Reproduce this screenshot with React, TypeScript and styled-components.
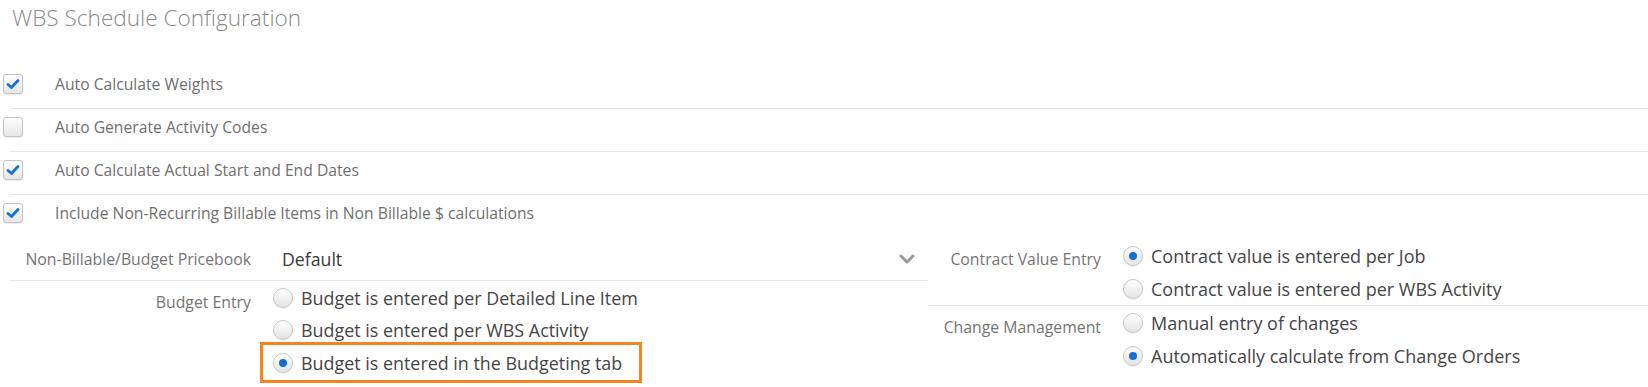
import React from "react";
import styled, { createGlobalStyle } from "styled-components";

const GlobalStyle = createGlobalStyle`
  html, body { margin: 0; padding: 0; background: #fff; }
  body { font-family: "Open Sans", "Noto Sans", sans-serif; color: #555; }
  * { box-sizing: border-box; }
`;

const Page = styled.div`
  width: 1648px;
  height: 387px;
  overflow: hidden;
`;

const Title = styled.h1`
  margin: 0;
  padding: 3px 0 0 12px;
  font-weight: 300;
  font-size: 22.6px;
  line-height: 30px;
  color: #8a8a8a;
`;

const CheckList = styled.div`
  margin-top: 33px;
`;

const CheckRow = styled.label`
  display: flex;
  align-items: center;
  gap: 32px;
  height: 42px;
  padding: 8px 0 14px 3px;
  font-size: 15.7px;
  line-height: 20px;
  color: #707070;
`;

const Divider = styled.div`
  height: 1px;
  margin-left: 10px;
  background: #e5e5e5;
`;

const Box = styled.span`
  flex-shrink: 0;
  width: 20px;
  height: 20px;
  border: 1px solid #c4c4c4;
  border-radius: 3px;
  background: linear-gradient(#ffffff, #e6e6e6);
  box-shadow: 0 1px 1px rgba(0, 0, 0, 0.08);
  display: flex;
  align-items: center;
  justify-content: center;
`;

const Lower = styled.div`
  display: flex;
`;

const LeftCol = styled.div`
  width: 918px;
  margin-left: 10px;
`;

const RightCol = styled.div`
  flex: 1;
  font-stretch: 88%;
`;

const SelectRow = styled.div`
  display: flex;
  align-items: center;
  height: 44px;
  border-bottom: 1px solid #e5e5e5;
`;

const FieldRow = styled.div<{ $divider?: boolean; $pt: number }>`
  display: flex;
  align-items: flex-start;
  padding-top: ${(p) => p.$pt}px;
  border-bottom: ${(p) => (p.$divider ? "1px solid #e5e5e5" : "none")};
`;

const FieldLabel = styled.div<{ $width: number; $pt?: number; $size: number }>`
  flex-shrink: 0;
  width: ${(p) => p.$width}px;
  padding-top: ${(p) => p.$pt ?? 0}px;
  text-align: right;
  white-space: nowrap;
  font-size: ${(p) => p.$size}px;
  line-height: 24px;
  color: #757575;
`;

const SelectBox = styled.div`
  flex: 1;
  display: flex;
  align-items: center;
  justify-content: space-between;
  margin-left: 31px;
  padding-right: 13px;
  font-size: 17.7px;
  color: #3a3a3a;
`;

const Options = styled.div`
  margin-left: 22px;
  display: flex;
  flex-direction: column;
`;

const Option = styled.label<{ $h: number; $size: number }>`
  display: flex;
  align-items: center;
  gap: 8px;
  height: ${(p) => p.$h}px;
  font-size: ${(p) => p.$size}px;
  color: #454545;
  white-space: nowrap;
`;

const Highlight = styled.div`
  align-self: flex-start;
  margin: -4px 0 0 -13px;
  padding: 0 17px 0 10px;
  height: 41px;
  display: flex;
  align-items: center;
  border: 3px solid #f5841f;
`;

const Radio = styled.span<{ $on?: boolean }>`
  flex-shrink: 0;
  width: 20px;
  height: 20px;
  border-radius: 50%;
  border: 1px solid #c6c6c6;
  background: linear-gradient(#ffffff, #e4e4e4);
  box-shadow: 0 1px 1px rgba(0, 0, 0, 0.06);
  display: flex;
  align-items: center;
  justify-content: center;
  &::after {
    content: "";
    display: ${(p) => (p.$on ? "block" : "none")};
    width: 8px;
    height: 8px;
    border-radius: 50%;
    background: #1470d6;
  }
`;

const Check = () => (
  <svg width="14" height="12" viewBox="0 0 14 12">
    <polyline
      points="2,6.5 5.5,9.5 12,2.5"
      fill="none"
      stroke="#1a6fd2"
      strokeWidth="2.8"
      strokeLinecap="round"
      strokeLinejoin="round"
    />
  </svg>
);

const Chevron = () => (
  <svg width="16" height="10" viewBox="0 0 16 10">
    <polyline
      points="2,2 8,8 14,2"
      fill="none"
      stroke="#9a9a9a"
      strokeWidth="3"
      strokeLinecap="round"
      strokeLinejoin="round"
    />
  </svg>
);

const checks = [
  { label: "Auto Calculate Weights", on: true },
  { label: "Auto Generate Activity Codes", on: false },
  { label: "Auto Calculate Actual Start and End Dates", on: true },
  { label: "Include Non-Recurring Billable Items in Non Billable $ calculations", on: true },
];

export default function App() {
  return (
    <Page>
      <GlobalStyle />
      <Title>WBS Schedule Configuration</Title>
      <CheckList>
        {checks.map((c, i) => (
          <React.Fragment key={c.label}>
            {i > 0 && <Divider />}
            <CheckRow>
              <Box>{c.on && <Check />}</Box>
              {c.label}
            </CheckRow>
          </React.Fragment>
        ))}
      </CheckList>
      <Lower>
        <LeftCol>
          <SelectRow>
            <FieldLabel $width={241} $size={15.8}>
              Non-Billable/Budget Pricebook
            </FieldLabel>
            <SelectBox>
              Default
              <Chevron />
            </SelectBox>
          </SelectRow>
          <FieldRow $pt={1}>
            <FieldLabel $width={241} $pt={8} $size={15.8}>
              Budget Entry
            </FieldLabel>
            <Options>
              <Option $h={32} $size={17.9}>
                <Radio />
                Budget is entered per Detailed Line Item
              </Option>
              <Option $h={32} $size={17.9}>
                <Radio />
                Budget is entered per WBS Activity
              </Option>
              <Highlight>
                <Option $h={35} $size={17.9}>
                  <Radio $on />
                  Budget is entered in the Budgeting tab
                </Option>
              </Highlight>
            </Options>
          </FieldRow>
        </LeftCol>
        <RightCol>
          <FieldRow $pt={2} $divider>
            <FieldLabel $width={173} $pt={8} $size={15.8}>
              Contract Value Entry
            </FieldLabel>
            <Options>
              <Option $h={33} $size={18}>
                <Radio $on />
                Contract value is entered per Job
              </Option>
              <Option $h={33} $size={18}>
                <Radio />
                Contract value is entered per WBS Activity
              </Option>
            </Options>
          </FieldRow>
          <FieldRow $pt={0}>
            <FieldLabel $width={173} $pt={9} $size={15.8}>
              Change Management
            </FieldLabel>
            <Options>
              <Option $h={33} $size={18}>
                <Radio />
                Manual entry of changes
              </Option>
              <Option $h={33} $size={18}>
                <Radio $on />
                Automatically calculate from Change Orders
              </Option>
            </Options>
          </FieldRow>
        </RightCol>
      </Lower>
    </Page>
  );
}
